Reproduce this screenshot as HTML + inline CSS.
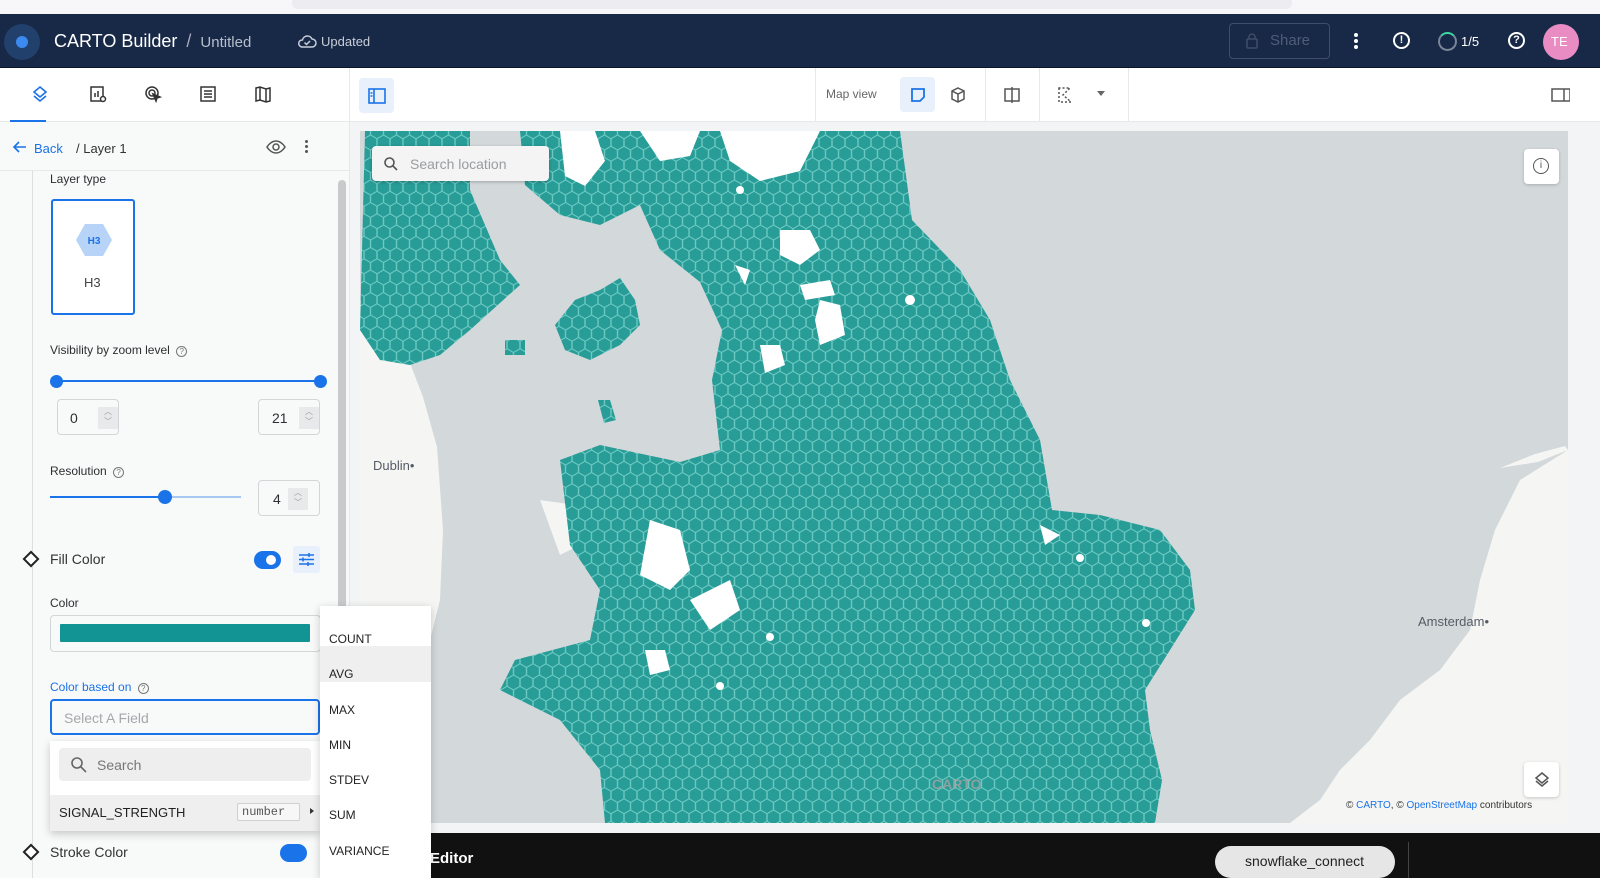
<!DOCTYPE html>
<html><head><meta charset="utf-8"><style>
*{box-sizing:border-box;margin:0;padding:0}
body{width:1600px;height:878px;overflow:hidden;font-family:"Liberation Sans",sans-serif;background:#fff;position:relative;color:#2c3032}
.a{position:absolute}
.t{font-size:13px}
</style></head><body>
<div class="a" style="left:0;top:0;width:1600px;height:14px;background:#f7f7f9"></div>
<div class="a" style="left:292px;top:0;width:1000px;height:9px;background:#ececf1;border-radius:0 0 6px 6px"></div>
<div class="a" style="left:0;top:14px;width:1600px;height:54px;background:#182847;border-bottom:1px solid #0c1528"></div>
<div class="a" style="left:4px;top:24px;width:36px;height:36px;border-radius:50%;background:#21406b"></div>
<div class="a" style="left:16px;top:36px;width:12px;height:12px;border-radius:50%;background:#3c8af0"></div>
<div class="a" style="left:54px;top:31px;color:#fff;font-size:18px">CARTO Builder <span style="color:#aab;margin-left:4px">/</span> <span style="color:#b8bfcc;font-size:15px;margin-left:4px">Untitled</span></div>
<svg class="a" style="left:297px;top:33px" width="20" height="16" viewBox="0 0 20 16"><path d="M5 14h10a4 4 0 0 0 0-8 5 5 0 0 0-9.5 1A3.5 3.5 0 0 0 5 14z" fill="none" stroke="#c9ced8" stroke-width="1.5"/><path d="M7.5 9.5l2 2 3.5-3.5" fill="none" stroke="#c9ced8" stroke-width="1.5"/></svg>
<div class="a" style="left:321px;top:34px;color:#c9ced8;font-size:13px">Updated</div>
<div class="a" style="left:1229px;top:23px;width:101px;height:36px;border:1px solid #3e4d68;border-radius:4px"></div>
<div class="a" style="left:1270px;top:32px;color:#4f5d78;font-size:15px">Share</div>
<svg class="a" style="left:1245px;top:32px" width="14" height="18"><rect x="2" y="7" width="10" height="9" rx="1" fill="none" stroke="#3e4d68" stroke-width="1.5"/><path d="M4 7V5a3 3 0 0 1 6 0v2" fill="none" stroke="#3e4d68" stroke-width="1.5"/></svg>
<div class="a" style="left:1354px;top:33px;width:4px;height:4px;background:#fff;border-radius:50%;box-shadow:0 6px 0 #fff,0 12px 0 #fff"></div>
<div class="a" style="left:1393px;top:32px;width:17px;height:17px;border:2px solid #fff;border-radius:50%;color:#fff;font-size:11px;font-weight:bold;text-align:center;line-height:13px">!</div>
<div class="a" style="left:1438px;top:32px;width:19px;height:19px;border:2px solid #7a8597;border-top-color:#3cd6a0;border-radius:50%"></div>
<div class="a" style="left:1461px;top:34px;color:#fff;font-size:13px">1/5</div>
<div class="a" style="left:1508px;top:32px;width:17px;height:17px;border:2px solid #fff;border-radius:50%;color:#fff;font-size:11px;font-weight:bold;text-align:center;line-height:13px">?</div>
<div class="a" style="left:1543px;top:24px;width:36px;height:36px;border-radius:50%;background:#e98cc4;color:#fff;font-size:13px;line-height:36px;padding-left:8px">TE</div>
<div class="a" style="left:0;top:68px;width:1600px;height:54px;background:#fff;border-bottom:1px solid #e6e8ea"></div>
<div class="a" style="left:349px;top:68px;width:1px;height:54px;background:#e6e8ea"></div>
<div class="a" style="left:10px;top:120px;width:36px;height:2px;background:#1a73e8"></div>
<svg class="a" style="left:30px;top:84px" width="20" height="20" viewBox="0 0 20 20" fill="none" stroke="#1a73e8" stroke-width="1.6"><path d="M10 3l6 5-6 5-6-5z"/><path d="M4 12l6 5 6-5"/></svg>
<svg class="a" style="left:88px;top:84px" width="20" height="20" viewBox="0 0 20 20" fill="none" stroke="#333" stroke-width="1.5"><rect x="3" y="3" width="12" height="14"/><path d="M7 13V9M10 13V7"/><circle cx="15" cy="15" r="2.5" fill="#fff"/></svg>
<svg class="a" style="left:143px;top:84px" width="20" height="20" viewBox="0 0 20 20" fill="none" stroke="#333" stroke-width="1.5"><circle cx="9" cy="9" r="6"/><circle cx="9" cy="9" r="3"/><path d="M10 10l7 3-3 1-1 3z" fill="#333"/></svg>
<svg class="a" style="left:198px;top:84px" width="20" height="20" viewBox="0 0 20 20" fill="none" stroke="#333" stroke-width="1.5"><rect x="3" y="3" width="14" height="14"/><path d="M6 7h8M6 10h8M6 13h8"/></svg>
<svg class="a" style="left:253px;top:84px" width="20" height="20" viewBox="0 0 20 20" fill="none" stroke="#333" stroke-width="1.5"><path d="M3 4l4-1 6 2 4-1v13l-4 1-6-2-4 1z M7 3v13M13 5v13"/></svg>
<div class="a" style="left:359px;top:78px;width:35px;height:35px;background:#e8f0fc;border-radius:4px"></div>
<svg class="a" style="left:367px;top:86px" width="20" height="20" viewBox="0 0 20 20" fill="none" stroke="#1a73e8" stroke-width="1.6"><rect x="2" y="3" width="16" height="14"/><path d="M7 3v14M3.5 7h2M3.5 10h2"/></svg>
<div class="a" style="left:815px;top:68px;width:1px;height:54px;background:#e6e8ea"></div>
<div class="a" style="left:826px;top:87px;color:#666;font-size:12px">Map view</div>
<div class="a" style="left:900px;top:77px;width:35px;height:35px;background:#e8f0fc;border-radius:4px"></div>
<svg class="a" style="left:908px;top:85px" width="20" height="20" viewBox="0 0 20 20" fill="none" stroke="#1a73e8" stroke-width="1.8"><path d="M4 4h12v8l-4 4H4z"/></svg>
<svg class="a" style="left:948px;top:85px" width="20" height="20" viewBox="0 0 20 20" fill="none" stroke="#555" stroke-width="1.5"><path d="M10 3l6 3v8l-6 3-6-3V6z M4 6l6 3 6-3M10 9v8"/></svg>
<div class="a" style="left:985px;top:68px;width:1px;height:54px;background:#e6e8ea"></div>
<svg class="a" style="left:1002px;top:85px" width="20" height="20" viewBox="0 0 20 20" fill="none" stroke="#555" stroke-width="1.5"><rect x="3" y="4" width="14" height="12"/><path d="M10 2v16"/></svg>
<div class="a" style="left:1039px;top:68px;width:1px;height:54px;background:#e6e8ea"></div>
<svg class="a" style="left:1055px;top:85px" width="20" height="20" viewBox="0 0 20 20" fill="none" stroke="#555" stroke-width="1.5" stroke-dasharray="2 2"><path d="M4 3v14h12L8 10l7-7z"/></svg>
<div class="a" style="left:1097px;top:91px;border:4px solid transparent;border-top:5px solid #666"></div>
<div class="a" style="left:1128px;top:68px;width:1px;height:54px;background:#e6e8ea"></div>
<svg class="a" style="left:1550px;top:85px" width="20" height="20" viewBox="0 0 20 20" fill="none" stroke="#555" stroke-width="1.5"><rect x="2" y="4" width="18" height="12"/><path d="M14 4v12"/></svg>
<div class="a" style="left:0;top:122px;width:350px;height:756px;background:#f8f9f9;border-right:1px solid #e6e8ea"></div>
<div class="a" style="left:0;top:170px;width:350px;height:1px;background:#e6e8ea"></div>
<div class="a" style="left:32px;top:171px;width:1px;height:707px;background:#dcdfe1"></div>
<div class="a" style="left:338px;top:180px;width:8px;height:630px;background:#c8cacc;border-radius:4px"></div>
<svg class="a" style="left:12px;top:140px" width="16" height="14" fill="none" stroke="#1a73e8" stroke-width="1.6"><path d="M14 7H2M7 2L2 7l5 5"/></svg>
<div class="a t" style="left:34px;top:141px;color:#1a73e8">Back</div>
<div class="a t" style="left:76px;top:141px;color:#333">/ Layer 1</div>
<svg class="a" style="left:266px;top:138px" width="20" height="18" fill="none" stroke="#555" stroke-width="1.5"><path d="M1 9s3.5-6 9-6 9 6 9 6-3.5 6-9 6-9-6-9-6z"/><circle cx="10" cy="9" r="3"/></svg>
<div class="a" style="left:305px;top:140px;width:3px;height:3px;background:#555;border-radius:50%;box-shadow:0 5px 0 #555,0 10px 0 #555"></div>
<div class="a t" style="left:50px;top:172px;font-size:12px">Layer type</div>
<div class="a" style="left:51px;top:199px;width:84px;height:116px;background:#fff;border:2px solid #1a73e8;border-radius:3px"></div>
<svg class="a" style="left:75px;top:223px" width="38" height="34"><polygon points="10,1 28,1 37,17 28,33 10,33 1,17" fill="#b7d3f7"/><text x="19" y="21" text-anchor="middle" font-size="10" font-weight="bold" fill="#1a73e8" font-family="Liberation Sans">H3</text></svg>
<div class="a t" style="left:84px;top:275px;color:#444">H3</div>
<div class="a t" style="left:50px;top:343px;font-size:12px">Visibility by zoom level <span style="display:inline-block;width:11px;height:11px;border:1px solid #777;border-radius:50%;font-size:8px;text-align:center;line-height:10px;color:#777;margin-left:3px">?</span></div>
<div class="a" style="left:56px;top:380px;width:264px;height:2px;background:#1a73e8"></div>
<div class="a" style="left:50px;top:375px;width:13px;height:13px;border-radius:50%;background:#1a73e8"></div>
<div class="a" style="left:314px;top:375px;width:13px;height:13px;border-radius:50%;background:#1a73e8"></div>
<div class="a" style="left:57px;top:399px;width:62px;height:36px;border:1px solid #d3d6d8;border-radius:4px;background:#f8f9f9"></div>
<div class="a" style="left:70px;top:410px;font-size:14px">0</div>
<div class="a" style="left:98px;top:407px;width:20px;height:22px;background:#e8e9ea;color:#999;font-size:8px;text-align:center;line-height:10px">︿<br>﹀</div>
<div class="a" style="left:258px;top:399px;width:62px;height:36px;border:1px solid #d3d6d8;border-radius:4px"></div>
<div class="a" style="left:272px;top:410px;font-size:14px">21</div>
<div class="a" style="left:299px;top:407px;width:20px;height:22px;background:#e8e9ea;color:#999;font-size:8px;text-align:center;line-height:10px">︿<br>﹀</div>
<div class="a t" style="left:50px;top:464px;font-size:12px">Resolution <span style="display:inline-block;width:11px;height:11px;border:1px solid #777;border-radius:50%;font-size:8px;text-align:center;line-height:10px;color:#777;margin-left:3px">?</span></div>
<div class="a" style="left:50px;top:496px;width:115px;height:2px;background:#1a73e8"></div>
<div class="a" style="left:165px;top:496px;width:76px;height:2px;background:#a7c7f4"></div>
<div class="a" style="left:158px;top:490px;width:14px;height:14px;border-radius:50%;background:#1a73e8"></div>
<div class="a" style="left:258px;top:480px;width:62px;height:36px;border:1px solid #d3d6d8;border-radius:4px"></div>
<div class="a" style="left:273px;top:491px;font-size:14px">4</div>
<div class="a" style="left:288px;top:488px;width:20px;height:22px;background:#e8e9ea;color:#999;font-size:8px;text-align:center;line-height:10px">︿<br>﹀</div>
<div class="a" style="left:25px;top:553px;width:12px;height:12px;border:2px solid #222;background:#fff;transform:rotate(45deg)"></div>
<div class="a" style="left:50px;top:551px;font-size:14px;color:#333">Fill Color</div>
<div class="a" style="left:254px;top:551px;width:27px;height:18px;border-radius:9px;background:#1a73e8"></div>
<div class="a" style="left:266px;top:555px;width:10px;height:10px;border-radius:50%;background:#fff"></div>
<div class="a" style="left:293px;top:546px;width:27px;height:27px;background:#e8f0fc;border-radius:3px"></div>
<svg class="a" style="left:298px;top:551px" width="17" height="17" stroke="#1a73e8" stroke-width="1.5"><path d="M1 4h15M1 8.5h15M1 13h15"/><path d="M11 2v4M5 6.5v4M10 11v4"/></svg>
<div class="a t" style="left:50px;top:596px;font-size:12px">Color</div>
<div class="a" style="left:50px;top:615px;width:271px;height:37px;border:1px solid #d3d6d8;border-radius:4px;background:#f8f9f9"></div>
<div class="a" style="left:60px;top:624px;width:250px;height:18px;background:#139494;border-radius:1px"></div>
<div class="a" style="left:50px;top:680px;font-size:12px;color:#1a73e8">Color based on <span style="display:inline-block;width:11px;height:11px;border:1px solid #777;border-radius:50%;font-size:8px;text-align:center;line-height:10px;color:#777;margin-left:3px">?</span></div>
<div class="a" style="left:50px;top:699px;width:270px;height:36px;border:2px solid #1a73e8;border-radius:4px"></div>
<div class="a" style="left:64px;top:710px;font-size:14px;color:#a5a8ab">Select A Field</div>
<div class="a" style="left:50px;top:741px;width:270px;height:90px;background:#fff;box-shadow:0 3px 8px rgba(0,0,0,.2)"></div>
<div class="a" style="left:59px;top:748px;width:252px;height:33px;background:#eeeeee;border-radius:4px"></div>
<svg class="a" style="left:70px;top:756px" width="18" height="18" fill="none" stroke="#666" stroke-width="1.6"><circle cx="7" cy="7" r="5"/><path d="M11 11l5 5"/></svg>
<div class="a" style="left:97px;top:757px;font-size:14px;color:#777">Search</div>
<div class="a" style="left:50px;top:795px;width:270px;height:36px;background:#efefef"></div>
<div class="a" style="left:59px;top:805px;font-size:13px;color:#222">SIGNAL_STRENGTH</div>
<div class="a" style="left:237px;top:803px;width:63px;height:18px;border:1px solid #d0d0d0;border-radius:2px;background:#f7f7f7;font-family:'Liberation Mono',monospace;font-size:12px;color:#555;padding-left:4px;line-height:16px">number</div>
<div class="a" style="left:310px;top:808px;border:3px solid transparent;border-left:4px solid #333"></div>
<div class="a" style="left:25px;top:846px;width:12px;height:12px;border:2px solid #222;background:#fff;transform:rotate(45deg)"></div>
<div class="a" style="left:50px;top:844px;font-size:14px;color:#333">Stroke Color</div>
<div class="a" style="left:280px;top:844px;width:27px;height:18px;border-radius:9px;background:#1a73e8"></div>
<div class="a" style="left:350px;top:122px;width:1250px;height:711px;background:#f3f4f5"></div>
<svg class="a" style="left:360px;top:131px" width="1208" height="692" viewBox="360 131 1208 692">
<defs>
<pattern id="hx" width="13" height="22.5" patternUnits="userSpaceOnUse">
<rect width="13" height="22.5" fill="#6cc9c2"/>
<g fill="#289c97">
<polygon points="6.5,0.6 12.3,4 12.3,11 6.5,14.4 0.7,11 0.7,4"/>
<polygon points="0,11.85 5.8,15.25 5.8,22.25 0,25.65 -5.8,22.25 -5.8,15.25"/>
<polygon points="13,11.85 18.8,15.25 18.8,22.25 13,25.65 7.2,22.25 7.2,15.25"/>
<polygon points="0,-10.65 5.8,-7.25 5.8,-0.25 0,3.15 -5.8,-0.25 -5.8,-7.25"/>
<polygon points="13,-10.65 18.8,-7.25 18.8,-0.25 13,3.15 7.2,-0.25 7.2,-7.25"/>
</g>
</pattern>
</defs>
<rect x="360" y="131" width="1208" height="692" fill="#d3d8da"/>
<path d="M1568 450L1520 480 1495 530 1480 580 1470 630 1440 670 1400 700 1370 740 1340 770 1320 800 1290 823H1568z" fill="#f5f5f4"/>
<path d="M1500 468l35-14 30-8 3 4-30 12z" fill="#f5f5f4"/>
<path d="M360 300L410 363 423 397 437 447 443 530 440 600 420 680 400 760 380 823H360z" fill="#f5f5f4"/>
<path d="M540 500L575 505 580 545 560 555z" fill="#f5f5f4"/>
<g fill="url(#hx)">
<path d="M365 131H470L470 190 500 260 520 285 470 330 440 355 410 365 380 360 360 330z"/>
<path d="M505 340h20v15h-20z"/>
<path d="M600 290L620 278 635 300 640 325 620 345 590 360 565 350 555 325 575 300z"/>
<path d="M520 131H900L912 220 960 270 990 320 1010 380 1040 440 1052 510 1100 515 1160 530 1190 570 1195 610 1170 650 1145 690 1150 730 1162 780 1155 823H605L600 770 560 720 500 690 515 660 590 640 600 590 570 545 560 460 600 445 680 462 720 450 712 380 722 330 700 282 660 250 640 205 600 225 560 215 525 185z"/>
<path d="M598 400l12 0 6 20-12 3z"/>
</g>
<g fill="#fff">
<path d="M560 131h35l10 30-20 25-20-10z"/><path d="M640 131h60l-10 25-30 5z"/><path d="M720 131h100l-20 40-40 10-30-20z"/>
<path d="M780 230l30 0 10 20-20 15-20-10z"/><path d="M820 300l20 5 5 30-25 10-5-25z"/><path d="M760 345l20 0 5 20-20 8z"/><path d="M800 285l30-5 5 15-30 5z"/><path d="M735 265l15 5-5 15z"/>
<path d="M650 520l30 10 10 40-20 20-30-15z"/><path d="M690 600l40-20 10 30-30 20z"/><path d="M645 650l20 0 5 20-20 5z"/><path d="M1040 525l20 10-15 10z"/>
<circle cx="770" cy="637" r="4"/><circle cx="1080" cy="558" r="4"/><circle cx="1146" cy="623" r="4"/><circle cx="720" cy="686" r="4"/><circle cx="910" cy="300" r="5"/><circle cx="740" cy="190" r="4"/>
</g>
<text x="373" y="470" font-size="13" fill="#555c66" font-family="Liberation Sans">Dublin•</text>
<text x="1418" y="626" font-size="13" fill="#555c66" font-family="Liberation Sans">Amsterdam•</text>
<text x="932" y="789" font-size="14" fill="#b9a4a4" font-weight="bold" font-family="Liberation Sans" opacity=".7">CARTO</text>
</svg>
<div class="a" style="left:372px;top:146px;width:177px;height:35px;background:#f4f4f4;border-radius:4px;box-shadow:0 1px 3px rgba(0,0,0,.25)"></div>
<svg class="a" style="left:383px;top:156px" width="16" height="16" fill="none" stroke="#555" stroke-width="1.6"><circle cx="6.5" cy="6.5" r="4.5"/><path d="M10 10l4 4"/></svg>
<div class="a" style="left:410px;top:156px;font-size:14px;color:#9a9da0">Search location</div>
<div class="a" style="left:1524px;top:149px;width:35px;height:35px;background:#fff;border-radius:4px;box-shadow:0 1px 3px rgba(0,0,0,.2)"></div>
<div class="a" style="left:1533px;top:158px;width:16px;height:16px;border:1.5px solid #555;border-radius:50%;font-size:10px;text-align:center;line-height:13px;color:#555">i</div>
<div class="a" style="left:1524px;top:762px;width:35px;height:35px;background:#fff;border-radius:4px;box-shadow:0 1px 3px rgba(0,0,0,.2)"></div>
<svg class="a" style="left:1532px;top:770px" width="20" height="20" fill="none" stroke="#555" stroke-width="1.5"><path d="M10 3l6 5-6 5-6-5z"/><path d="M4 11l6 5 6-5"/></svg>
<div class="a" style="left:1346px;top:800px;font-size:10px;color:#333">© <span style="color:#1a73e8">CARTO</span>, © <span style="color:#1a73e8">OpenStreetMap</span> contributors</div>
<div class="a" style="left:350px;top:833px;width:1250px;height:45px;background:#111"></div>
<div class="a" style="left:430px;top:850px;color:#fff;font-size:15px;font-weight:bold">Editor</div>
<div class="a" style="left:1215px;top:846px;width:180px;height:32px;background:#e6e6e6;border-radius:16px;font-size:14px;color:#222;padding:7px 0 0 30px">snowflake_connect</div>
<div class="a" style="left:1408px;top:842px;width:1px;height:36px;background:#444"></div>
<div class="a" style="left:320px;top:606px;width:111px;height:272px;background:#fff;box-shadow:0 2px 8px rgba(0,0,0,.2)"></div>
<div class="a" style="left:320px;top:646px;width:111px;height:36px;background:#efefef"></div>
<div class="a" style="left:329px;top:622px;font-size:12px;line-height:35.3px;color:#222">COUNT<br>AVG<br>MAX<br>MIN<br>STDEV<br>SUM<br>VARIANCE</div>
</body></html>
